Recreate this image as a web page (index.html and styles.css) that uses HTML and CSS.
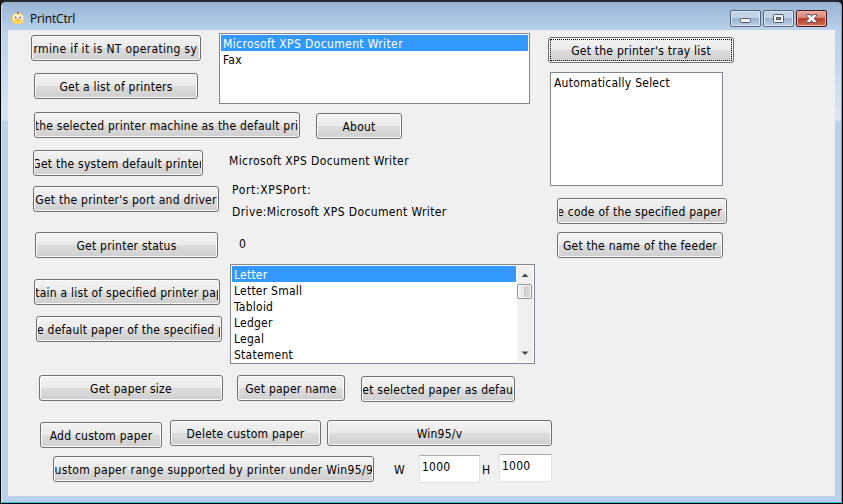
FILE: index.html
```html
<!DOCTYPE html>
<html lang="en">
<head>
<meta charset="utf-8">
<title>PrintCtrl</title>
<link rel="stylesheet" href="styles.css">
</head>
<body>
<div class="window">
  <header class="titlebar">
    <svg class="app-icon" width="14" height="14" viewBox="0 0 14 14">
      <path d="M1 9C0 5 3 2 7 2s7 3 6 7c0 3-3 4-6 4s-6-1-6-4z" fill="#fbd65a"/>
      <path d="M2 6.500C3 3 5 2.500 7 2.500s4 .5 5 4v2H2z" fill="#fff0bd"/>
      <path d="M6 0l1.500 1L8 3H6z" fill="#e44f3c"/>
      <circle cx="4.300" cy="6.500" r="1.900" fill="#fff"/><circle cx="9.700" cy="6.500" r="1.900" fill="#fff"/>
      <circle cx="4.700" cy="6.500" r=".9" fill="#5b4a46"/><circle cx="9.300" cy="6.500" r=".9" fill="#5b4a46"/>
      <path d="M5.800 7.500h2.400L7 10z" fill="#ee8c20"/>
    </svg>
    <h1 class="title">PrintCtrl</h1>
    <div class="controls">
      <div class="control"><svg width="29" height="15" viewBox="0 0 29 15"><rect x="9.500" y="7.500" width="10" height="4" rx="1" fill="#f5f5f5" stroke="#535666"/></svg></div>
      <div class="control"><svg width="29" height="15" viewBox="0 0 29 15"><rect x="9.500" y="3.500" width="10" height="8" rx="1" fill="#f5f5f5" stroke="#535666"/><rect x="12.500" y="6.500" width="4" height="2" fill="#7998b8" stroke="#535666"/></svg></div>
      <div class="control close"><svg width="29" height="15" viewBox="0 0 29 15"><path d="M9.500 3.500h3.500l1.500 2 1.500-2h3.500v1.500L17 7.500l2.500 2.500v1.500H16l-1.500-2-1.500 2H9.500V10L12 7.500 9.500 5z" fill="#f8f8f8" stroke="#535666"/></svg></div>
    </div>
  </header>
  <main class="client">
    <div class="upper">
      <section class="printers">
        <div class="row row-list">
          <div class="stack">
            <button class="btn b-nt"><span>Determine if it is NT operating system</span></button>
            <button class="btn b-printers"><span>Get a list of printers</span></button>
          </div>
          <ul class="listbox printer-list">
            <li class="selected printer-name">Microsoft XPS Document Writer</li>
            <li>Fax</li>
          </ul>
        </div>
        <div class="row row-default">
          <button class="btn b-setdefault"><span>Set the selected printer machine as the default printer</span></button>
          <button class="btn b-about"><span>About</span></button>
        </div>
        <div class="row row-system">
          <button class="btn b-system"><span>Get the system default printer</span></button>
          <span class="label system-name printer-name">Microsoft XPS Document Writer</span>
        </div>
        <div class="row row-port">
          <button class="btn b-port"><span>Get the printer's port and driver</span></button>
          <div class="port-info printer-name">
            <span class="label port-name">Port:XPSPort:</span>
            <span class="label">Drive:Microsoft XPS Document Writer</span>
          </div>
        </div>
        <div class="row row-status">
          <button class="btn b-status"><span>Get printer status</span></button>
          <span class="label status-value">0</span>
        </div>
      </section>
      <section class="trays">
        <button class="btn b-tray focused"><span>Get the printer's tray list</span></button>
        <ul class="listbox tray-list"><li>Automatically Select</li></ul>
        <button class="btn b-code"><span>Get the code of the specified paper feeder</span></button>
        <button class="btn b-feeder"><span>Get the name of the feeder</span></button>
      </section>
    </div>
    <section class="row papers">
      <div class="stack">
        <button class="btn b-obtain"><span>Obtain a list of specified printer paper</span></button>
        <button class="btn b-defpaper"><span>Get the default paper of the specified printer</span></button>
      </div>
      <div class="listbox paper-list">
        <ul class="items">
          <li class="selected">Letter</li>
          <li>Letter Small</li>
          <li>Tabloid</li>
          <li>Ledger</li>
          <li>Legal</li>
          <li>Statement</li>
        </ul>
        <div class="scrollbar">
          <svg class="arrow" width="16" height="17" viewBox="0 0 16 17"><path d="M4.500 11L8 7.500l3.500 3.500z" fill="#4a4a4a"/></svg>
          <div class="thumb"></div>
          <svg class="arrow arrow-down" width="16" height="17" viewBox="0 0 16 17"><path d="M4.500 6.500L8 10l3.500-3.500z" fill="#4a4a4a"/></svg>
        </div>
      </div>
    </section>
    <div class="row row-size">
      <button class="btn b-size"><span>Get paper size</span></button>
      <button class="btn b-name"><span>Get paper name</span></button>
      <button class="btn b-setpaper"><span>Set selected paper as default</span></button>
    </div>
    <div class="row row-custom">
      <button class="btn b-add"><span>Add custom paper</span></button>
      <button class="btn b-delete"><span>Delete custom paper</span></button>
      <button class="btn b-win"><span>Win95/v</span></button>
    </div>
    <div class="row row-range">
      <button class="btn b-range"><span>Custom paper range supported by printer under Win95/98</span></button>
      <span class="label size-label label-w">W</span>
      <input class="field field-w" type="text" value="1000" aria-label="W">
      <span class="label size-label label-h">H</span>
      <input class="field field-h" type="text" value="1000" aria-label="H">
    </div>
  </main>
</div>
</body>
</html>
```
FILE: styles.css
```css
* { box-sizing: border-box; }
body {
  margin: 0;
  background: #1b1b1f;
  color: #000;
  font: 12px/16px "DejaVu Sans Condensed", "DejaVu Sans", sans-serif;
  font-stretch: condensed;
  letter-spacing: 0.24px;
}
ul { margin: 0; padding: 0; list-style: none; }

.window {
  width: 843px;
  height: 504px;
  padding: 0 6px 6px;
  border: 1px solid #000;
  border-top: 2px solid #26282e;
  border-radius: 6px 6px 0 0;
  background:
    linear-gradient(#98b4d2, #b9d1ea 28px, #d9e6f4 118px, #b9d1ea 119px);
  box-shadow: inset 1px 0 #d6e5f5, inset -1px -1px #38bfd8;
}
.titlebar { display: flex; height: 28px; padding: 9px 0 0 4px; }
.app-icon { flex: none; }
.title {
  margin: 0 0 0 5px;
  font: 12px/16px "Open Sans", "Noto Sans", sans-serif;
  letter-spacing: -0.15px;
}
.controls { display: flex; gap: 2px; margin: -1px 9px 0 auto; }
.control {
  width: 31px;
  height: 17px;
  border: 1px solid #56657a;
  border-radius: 2px;
  background: linear-gradient(#c3d4e7 0 45%, #98b2cd 46%, #b7d0e8);
  box-shadow: inset 0 0 0 1px #dce8f5;
}
.control svg { display: block; }
.close {
  border-color: #431422;
  background: linear-gradient(#e9a99c 0, #d98474 45%, #b83b26 46%, #d06b4c);
  box-shadow: inset 0 0 0 1px #e9b7ac;
}
.client { height: 466px; margin: 0 0 0 1px; width: 827px; background: #f0f0f0; overflow: hidden; }

.btn {
  display: flex;
  flex: none;
  justify-content: center;
  align-items: center;
  height: 26px;
  padding: 1px 1px 0;
  overflow: hidden;
  overflow: clip;
  overflow-clip-margin: content-box;
  border: 1px solid #707070;
  border-radius: 3px;
  background: linear-gradient(#f2f2f2, #ebebeb 48%, #dddddd 50%, #cfcfcf);
  box-shadow: inset 0 0 0 1px #fafafa;
  color: #000;
  font: inherit;
  letter-spacing: inherit;
  white-space: nowrap;
}
.btn span { flex: none; }
.focused { outline: 1px dotted #000; outline-offset: -3px; }
.row { display: flex; align-items: flex-start; }
.stack { flex: none; }
.upper { display: flex; height: 234px; }
.printers { width: 540px; }

.listbox { flex: none; padding: 1px; border: 1px solid #828790; background: #fff; }
.listbox li { height: 16px; padding: 0 2px; line-height: 18px; white-space: nowrap; }
.listbox .selected { background: #3399ff; color: #fff; }
.label { white-space: nowrap; }
.printer-name { letter-spacing: 0.38px; }

.row-list { height: 82px; padding-top: 3px; }
.row-list .stack { width: 211px; padding: 2px 0 0 23px; }
.b-nt { width: 170px; padding: 1px 2px 0; letter-spacing: 0.35px; }
.b-printers { width: 164px; margin: 12px 0 0 3px; }
.printer-list { width: 311px; height: 71px; }
.row-default { height: 38px; padding-left: 26px; }
.b-setdefault { width: 266px; }
.b-about { width: 86px; margin: 1px 0 0 16px; }
.row-system { height: 36px; padding-left: 25px; }
.b-system { width: 170px; }
.system-name { margin: 3px 0 0 26px; }
.row-port { height: 46px; padding-left: 25px; }
.b-port { width: 186px; }
.port-info { display: flex; flex-direction: column; gap: 6px; margin: -4px 0 0 13px; }
.port-name { letter-spacing: 0.65px; }
.row-status { padding-left: 27px; }
.b-status { width: 183px; }
.status-value { margin: 4px 0 0 21px; }

.trays { padding-top: 7px; }
.b-tray { width: 186px; }
.tray-list { width: 173px; height: 114px; margin: 9px 0 0 2px; }
.b-code { width: 170px; margin: 12px 0 0 9px; }
.b-feeder { width: 166px; margin: 8px 0 0 9px; }

.papers { height: 111px; }
.papers .stack { width: 222px; padding: 15px 0 0 26px; }
.b-obtain { width: 186px; }
.b-defpaper { width: 186px; margin: 11px 0 0 2px; }
.paper-list { display: flex; width: 305px; height: 100px; }
.items { flex: 1; }
.scrollbar { display: flex; flex-direction: column; width: 16px; margin-left: 1px; background: #f0f0f0; }
.arrow { flex: none; }
.arrow-down { margin-top: auto; }
.thumb {
  width: 15px;
  height: 15px;
  margin: 1px 0 0;
  border: 1px solid #959595;
  border-radius: 2px;
  background: linear-gradient(90deg, #f5f5f5, #e4e4e4 45%, #cfcfcf 50%, #dcdcdc);
  box-shadow: inset 0 0 0 1px #fafafa;
}

.row-size { height: 45px; padding-left: 31px; }
.b-size { width: 184px; }
.b-name { width: 108px; margin-left: 14px; }
.b-setpaper { width: 154px; margin: 1px 0 0 16px; }
.row-custom { height: 34px; padding-left: 32px; }
.b-add { width: 122px; margin-top: 2px; }
.b-delete { width: 151px; margin-left: 8px; }
.b-win { width: 225px; margin-left: 6px; }
.row-range { padding-left: 45px; }
.b-range { width: 321px; margin-top: 2px; letter-spacing: 0.33px; }
.size-label { flex: none; margin-top: 8px; }
.label-w { width: 25px; margin-left: 20px; }
.label-h { width: 17px; margin-left: 2px; }
.field {
  flex: none;
  height: 28px;
  padding: 0 2px 4px;
  border: 1px solid #e2e3ea;
  border-top-color: #abadb3;
  border-radius: 1px;
  background: #fff;
  color: #000;
  font: inherit;
  letter-spacing: inherit;
}
.field-w { width: 61px; margin-top: 1px; }
.field-h { width: 53px; }
```
